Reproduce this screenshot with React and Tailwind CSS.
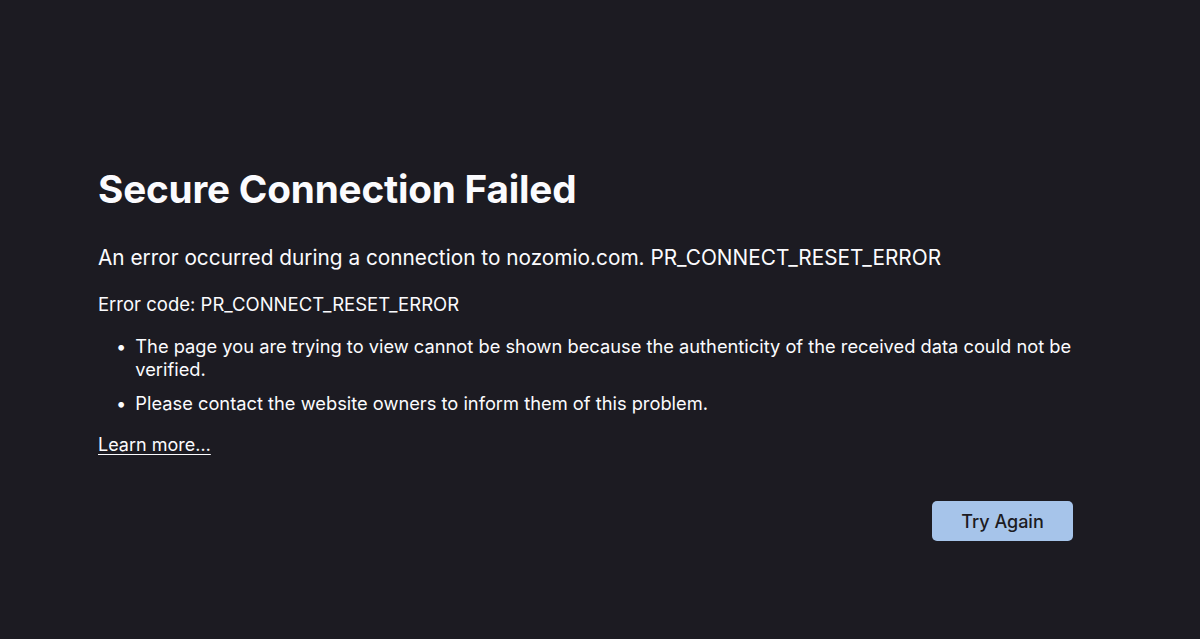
import React from 'react';

const ErrorPage = () => {
  return (
    <div className="min-h-screen w-full bg-[#1c1b22] text-[#fbfbfe]" style={{ fontFamily: 'Inter, "Noto Sans", sans-serif' }}>
      <div className="pl-[98px] pt-[166px] w-[1073px]">
        <h1 className="text-[38.7px] font-bold leading-[46px] tracking-[-0.2px]">Secure Connection Failed</h1>

        <p className="mt-[32px] text-[20.8px] leading-[28px]">
          An error occurred during a connection to nozomio.com. PR_CONNECT_RESET_ERROR
        </p>

        <p className="mt-[20px] text-[18.5px] leading-[24px]">Error code: PR_CONNECT_RESET_ERROR</p>

        <ul className="mt-[19px] pl-[18px] text-[18.3px] leading-[23px] space-y-[11px]">
          <li className="flex gap-[9px]">
            <span className="shrink-0">•</span>
            <span>The page you are trying to view cannot be shown because the authenticity of the received data could not be verified.</span>
          </li>
          <li className="flex gap-[9px]">
            <span className="shrink-0">•</span>
            <span>Please contact the website owners to inform them of this problem.</span>
          </li>
        </ul>

        <a href="#" className="inline-block mt-[18px] text-[18px] leading-[24px] underline underline-offset-[3px] decoration-1">
          Learn more…
        </a>

        <div className="flex justify-end mt-[44px]">
          <button className="w-[141px] h-[40px] rounded-[5px] bg-[#a6c4ea] text-[#1c1b22] text-[18px] font-medium">
            Try Again
          </button>
        </div>
      </div>
    </div>
  );
};

export default function App() {
  return <ErrorPage />;
}
